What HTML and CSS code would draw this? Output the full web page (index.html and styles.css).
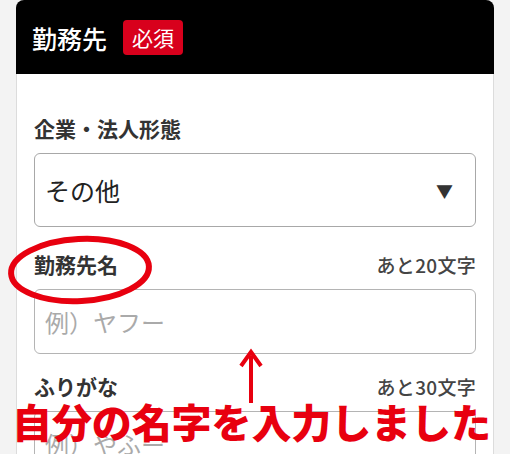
FILE: index.html
```html
<!DOCTYPE html>
<html lang="ja">
<head>
  <meta charset="UTF-8">
  <meta name="viewport" content="width=device-width, initial-scale=1.0">
  <title>勤務先</title>
  <link rel="stylesheet" href="styles.css">
</head>
<body>
  <div class="card">
    <div class="card-header">
      <span class="card-title">勤務先</span>
      <span class="badge">必須</span>
    </div>
    <div class="card-body">
      <div class="field field-select">
        <div class="field-label">
          <span class="label">企業・法人形態</span>
        </div>
        <div class="select">
          <span>その他</span>
          <span class="select-arrow">▼</span>
        </div>
      </div>

      <div class="field">
        <div class="field-label">
          <span class="label">勤務先名</span>
          <span class="counter">あと20文字</span>
        </div>
        <div class="input"><span class="placeholder">例）ヤフー</span></div>
      </div>

      <div class="field">
        <div class="field-label">
          <span class="label">ふりがな</span>
          <span class="counter">あと30文字</span>
        </div>
        <div class="input"><span class="placeholder">例）やふー</span></div>
      </div>
    </div>
  </div>

  <!-- annotations drawn over the screenshot -->
  <svg class="marks" width="510" height="454" viewBox="0 0 510 454">
    <ellipse cx="80" cy="270" rx="69" ry="31" fill="none" stroke="#e8000f" stroke-width="6" transform="rotate(-3 80 270)"/>
    <line x1="251" y1="356" x2="251" y2="403" stroke="#e8000f" stroke-width="4"/>
    <path d="M241 366 L251 352 L261 366" fill="none" stroke="#e8000f" stroke-width="4" stroke-linejoin="miter"/>
  </svg>
  <div class="note">自分の名字を入力しました</div>
</body>
</html>
```

FILE: styles.css
```css
body {
  margin: 0;
  background-color: #f3f3f3;
  font-family: "Noto Sans CJK JP", "Noto Sans", sans-serif;
  color: #222;
  position: relative;
  height: 454px;
  overflow: hidden;
}
.card {
  margin: 0 16px;
  background-color: #fff;
  border: 1px solid #dcdcdc;
  border-top: none;
  border-radius: 8px 8px 0 0;
  min-height: 460px;
}
.card-header {
  background-color: #000;
  height: 74px;
  display: flex;
  align-items: center;
  gap: 16px;
  padding-left: 16px;
  border-radius: 8px 8px 0 0;
  margin: 0 -1px;
}
.card-title {
  color: #fff;
  font-size: 25px;
  font-weight: 500;
  line-height: 30px;
  padding-top: 2px;
}
.badge {
  background-color: #d8001c;
  color: #fff;
  font-size: 21px;
  line-height: 35px;
  height: 35px;
  padding: 0 9px;
  border-radius: 4px;
}
.card-body {
  padding: 39px 17px 0;
}
.field {
  margin-bottom: 17px;
}
.field-select {
  margin-bottom: 22px;
}
.field-label {
  display: flex;
  justify-content: space-between;
  align-items: center;
  height: 30px;
  margin-bottom: 10px;
}
.label {
  font-size: 21px;
  font-weight: bold;
  color: #333;
}
.counter {
  font-size: 19px;
  font-weight: 500;
  color: #444;
  letter-spacing: 0.3px;
}
.select {
  height: 74px;
  box-sizing: border-box;
  border: 1.5px solid #a8a8a8;
  border-radius: 6px;
  display: flex;
  align-items: center;
  justify-content: space-between;
  padding: 0 22px 0 10px;
  font-size: 25px;
}
.select-arrow {
  font-size: 17px;
  color: #333;
}
.input {
  height: 65px;
  box-sizing: border-box;
  border: 1.5px solid #b4b4b4;
  border-radius: 6px;
  display: flex;
  align-items: center;
  padding: 0 10px;
}
.placeholder {
  font-size: 24px;
  color: #aaa;
}
.marks {
  position: absolute;
  left: 0;
  top: 0;
}
.note {
  position: absolute;
  left: 12px;
  top: 399px;
  font-size: 40px;
  line-height: 44px;
  font-weight: 900;
  color: #e8000f;
  white-space: nowrap;
  letter-spacing: -0.1px;
}
```
